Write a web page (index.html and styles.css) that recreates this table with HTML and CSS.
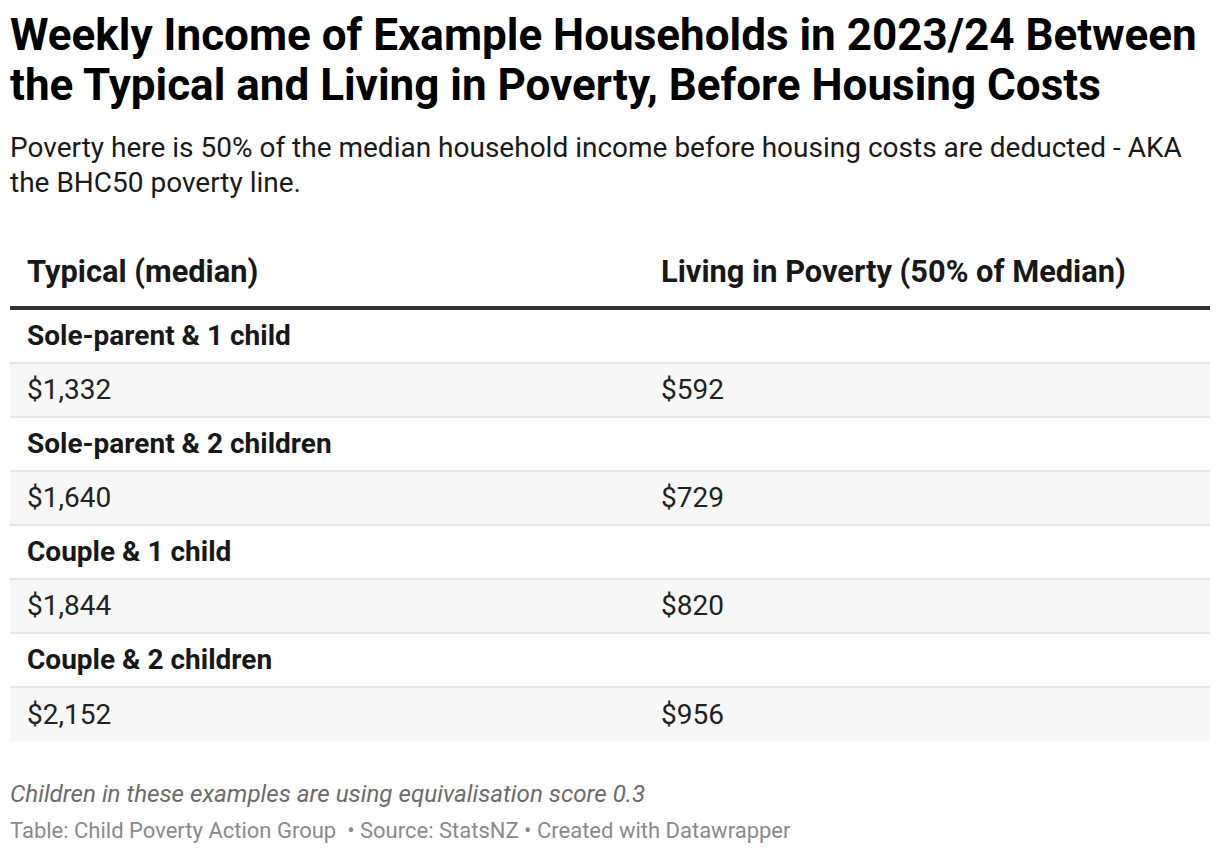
FILE: index.html
```html
<!DOCTYPE html>
<html lang="en">
<head>
<meta charset="utf-8">
<title>Weekly Income of Example Households</title>
<link rel="stylesheet" href="styles.css">
</head>
<body>
<div class="chart">
  <h1 class="title">Weekly Income of Example Households in 2023/24 Between the Typical and Living in Poverty, Before Housing Costs</h1>
  <p class="subtitle">Poverty here is 50% of the median household income before housing costs are deducted - AKA the BHC50 poverty line.</p>
  <div class="table">
    <div class="row head">
      <div class="cell">Typical (median)</div>
      <div class="cell">Living in Poverty (50% of Median)</div>
    </div>
    <div class="row group"><div class="cell">Sole-parent &amp; 1 child</div><div class="cell"></div></div>
    <div class="row value"><div class="cell">$1,332</div><div class="cell">$592</div></div>
    <div class="row group"><div class="cell">Sole-parent &amp; 2 children</div><div class="cell"></div></div>
    <div class="row value"><div class="cell">$1,640</div><div class="cell">$729</div></div>
    <div class="row group"><div class="cell">Couple &amp; 1 child</div><div class="cell"></div></div>
    <div class="row value"><div class="cell">$1,844</div><div class="cell">$820</div></div>
    <div class="row group"><div class="cell">Couple &amp; 2 children</div><div class="cell"></div></div>
    <div class="row value last"><div class="cell">$2,152</div><div class="cell">$956</div></div>
  </div>
  <p class="notes">Children in these examples are using equivalisation score 0.3</p>
  <p class="footer">Table: Child Poverty Action Group &nbsp;• Source: StatsNZ • Created with Datawrapper</p>
</div>
</body>
</html>
```
FILE: styles.css
```css
html, body {
  margin: 0;
  padding: 0;
  background: #ffffff;
}
body {
  font-family: Roboto, "Liberation Sans", sans-serif;
  color: #181818;
}
.chart {
  padding: 10px 10px 0 10px;
}
.title {
  margin: 0;
  font-size: 44px;
  line-height: 50px;
  font-weight: 700;
  color: #000000;
}
.subtitle {
  margin: 20px 0 0 0;
  font-size: 28px;
  line-height: 35px;
  color: #1a1a1a;
}
.table {
  margin-top: 40px;
}
.row {
  display: grid;
  grid-template-columns: 634px 1fr;
  height: 54px;
  box-sizing: border-box;
  align-items: center;
  font-size: 28px;
  line-height: 34px;
}
.cell {
  padding-left: 17px;
}
.head {
  height: auto;
  padding: 14px 0 16px 0;
  font-size: 30.8px;
  line-height: 36px;
  font-weight: 700;
  border-bottom: 4px solid #333333;
}
.group {
  font-weight: 700;
  border-bottom: 2px solid #e6e6e6;
}
.value {
  background: #f7f7f7;
  border-bottom: 2px solid #e6e6e6;
  color: #222222;
}
.value.last {
  border-bottom: none;
}
.notes {
  margin: 37px 0 0 0;
  font-size: 24.2px;
  font-style: italic;
  color: #6b6b6b;
  line-height: 30px;
}
.footer {
  margin: 8px 0 0 0;
  font-size: 22px;
  color: #8a8a8a;
  line-height: 28px;
}
```
